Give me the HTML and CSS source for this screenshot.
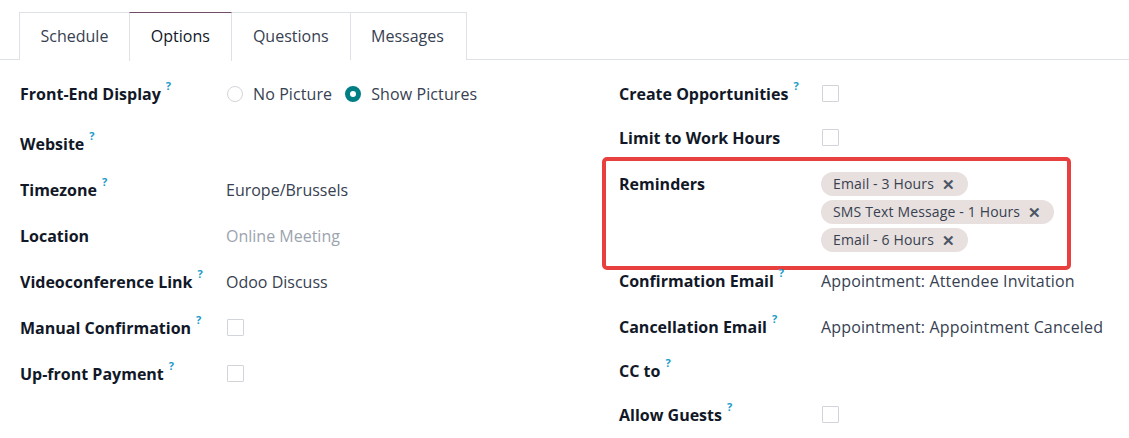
FILE: index.html
```html
<!DOCTYPE html>
<html>
<head>
<meta charset="utf-8">
<link rel="stylesheet" href="styles.css">
</head>
<body>
<div class="page">
  <ul class="tabs">
    <li class="tab">Schedule</li>
    <li class="tab active">Options</li>
    <li class="tab">Questions</li>
    <li class="tab">Messages</li>
  </ul>
  <div class="sheet">
    <div class="col col-left">
      <div class="row">
        <div class="label">Front-End Display<sup class="help">?</sup></div>
        <div class="value radios">
          <span class="radio"></span><span class="radio-text">No Picture</span>
          <span class="radio checked"></span><span class="radio-text">Show Pictures</span>
        </div>
      </div>
      <div class="row row-tall">
        <div class="label">Website<sup class="help">?</sup></div>
        <div class="value"></div>
      </div>
      <div class="row">
        <div class="label">Timezone<sup class="help">?</sup></div>
        <div class="value">Europe/Brussels</div>
      </div>
      <div class="row">
        <div class="label">Location</div>
        <div class="value placeholder">Online Meeting</div>
      </div>
      <div class="row">
        <div class="label">Videoconference Link<sup class="help">?</sup></div>
        <div class="value">Odoo Discuss</div>
      </div>
      <div class="row">
        <div class="label">Manual Confirmation<sup class="help">?</sup></div>
        <div class="value"><span class="checkbox"></span></div>
      </div>
      <div class="row">
        <div class="label">Up-front Payment<sup class="help">?</sup></div>
        <div class="value"><span class="checkbox"></span></div>
      </div>
    </div>
    <div class="col col-right">
      <div class="row">
        <div class="label">Create Opportunities<sup class="help">?</sup></div>
        <div class="value"><span class="checkbox"></span></div>
      </div>
      <div class="row">
        <div class="label">Limit to Work Hours</div>
        <div class="value"><span class="checkbox"></span></div>
      </div>
      <div class="row row-highlight">
        <div class="highlight"></div>
        <div class="label">Reminders</div>
        <div class="value tags">
          <span class="tag">Email - 3 Hours<span class="tag-x">✕</span></span>
          <span class="tag">SMS Text Message - 1 Hours<span class="tag-x">✕</span></span>
          <span class="tag">Email - 6 Hours<span class="tag-x">✕</span></span>
        </div>
      </div>
      <div class="row">
        <div class="label">Confirmation Email<sup class="help">?</sup></div>
        <div class="value">Appointment: Attendee Invitation</div>
      </div>
      <div class="row row-shift">
        <div class="label">Cancellation Email<sup class="help">?</sup></div>
        <div class="value">Appointment: Appointment Canceled</div>
      </div>
      <div class="row">
        <div class="label">CC to<sup class="help">?</sup></div>
        <div class="value"></div>
      </div>
      <div class="row">
        <div class="label">Allow Guests<sup class="help">?</sup></div>
        <div class="value"><span class="checkbox"></span></div>
      </div>
    </div>
  </div>
</div>
</body>
</html>
```
FILE: styles.css
```css
* { box-sizing: border-box; }
html, body { margin: 0; padding: 0; background: #fff; }
body {
  font-family: "Open Sans", "Noto Sans", sans-serif;
  font-size: 16px;
  color: #374151;
  width: 1129px;
  height: 438px;
  overflow: hidden;
}
.page { padding-top: 12px; }
.tabs {
  list-style: none;
  margin: 0;
  padding: 0 0 0 19px;
  display: flex;
  border-bottom: 1px solid #dee2e6;
  height: 48px;
}
.tab {
  height: 48px;
  padding: 0 20.5px 2px;
  display: flex;
  align-items: center;
  border: 1px solid #dee2e6;
  border-bottom: none;
  margin-left: -1px;
  background: #fff;
  color: #374151;
  line-height: 24px;
}
.tab:first-child { margin-left: 0; }
.tab:nth-child(3) { padding: 0 21px 2px; }
.tab:last-child { padding-right: 22.5px; }
.tab.active {
  border-top: 1px solid #714b67;
  color: #111827;
  height: 49px;
  margin-bottom: -1px;
  position: relative;
  z-index: 1;
  padding: 0 21px 3px;
}
.sheet {
  display: grid;
  grid-template-columns: 599px 1fr;
  padding: 22px 0 0 20px;
}
.col { display: flex; flex-direction: column; }
.col-left { gap: 22px; }
.col-right { gap: 20px; }
.row {
  display: grid;
  line-height: 24px;
  min-height: 24px;
  position: relative;
}
.col-left .row { grid-template-columns: 206px 1fr; }
.col-right .row { grid-template-columns: 202px 1fr; }
.row-tall { min-height: 28px; padding-top: 4px; }
.row-highlight { margin-top: 2px; margin-bottom: -3px; }
.row-shift { margin-top: 2px; }
.label {
  font-weight: 700;
  color: #111827;
  white-space: nowrap;
}
.help {
  color: #1a9bc8;
  font-size: 11px;
  font-weight: 700;
  vertical-align: top;
  line-height: 14px;
  margin-left: 5px;
  position: relative;
  top: -3px;
}
.value { color: #374151; white-space: nowrap; }
.col-right .value { letter-spacing: 0.15px; }
.placeholder { color: #9ca3af; }
.radios { display: flex; align-items: center; }
.radio {
  width: 16px;
  height: 16px;
  border-radius: 50%;
  border: 1px solid #d1d5db;
  display: inline-block;
  margin-left: 1px;
  margin-right: 10px;
}
.radio.checked {
  border: 5px solid #017e84;
  margin-left: 13px;
}
.radio-text { letter-spacing: 0.1px; }
.checkbox {
  display: inline-block;
  width: 17px;
  height: 17px;
  border: 1px solid #d1d5db;
  border-radius: 1px;
  margin-left: 1px;
  vertical-align: middle;
  position: relative;
  top: -2px;
}
.tags {
  display: flex;
  flex-direction: column;
  align-items: flex-start;
  gap: 4px;
}
.tag {
  display: inline-flex;
  align-items: center;
  height: 24px;
  border-radius: 12px;
  background: #e7e0de;
  color: #374151;
  font-size: 14px;
  letter-spacing: 0.15px;
  padding: 0 13px 0 12px;
}
.tag-x {
  margin-left: 8px;
  font-size: 15px;
  color: #4b5563;
  font-weight: 700;
}
.highlight {
  position: absolute;
  left: -17px;
  top: -15px;
  width: 469px;
  height: 113px;
  border: 4px solid #e8403f;
  border-radius: 5px;
  pointer-events: none;
}
```
